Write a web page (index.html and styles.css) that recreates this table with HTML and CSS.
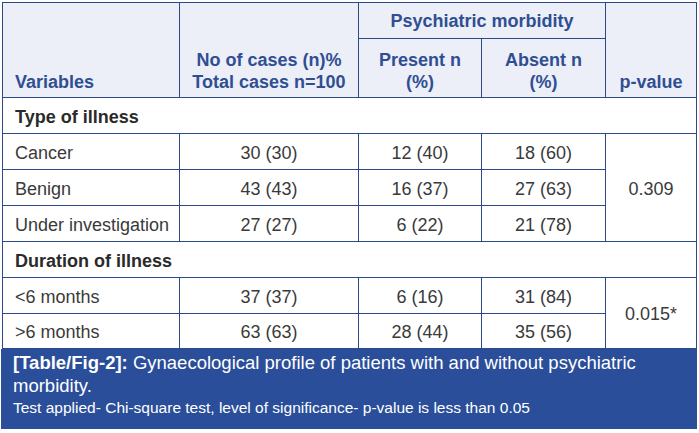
FILE: index.html
```html
<!DOCTYPE html>
<html>
<head>
<meta charset="utf-8">
<link rel="stylesheet" href="styles.css">
</head>
<body>
<div class="wrap">
<table class="tbl">
  <colgroup>
    <col class="c1"><col class="c2"><col class="c3"><col class="c4"><col class="c5">
  </colgroup>
  <thead>
    <tr class="h1">
      <th rowspan="2" class="left bottom">Variables</th>
      <th rowspan="2" class="bottom">No of cases (n)%<br>Total cases n=100</th>
      <th colspan="2" class="mid">Psychiatric morbidity</th>
      <th rowspan="2" class="bottom">p-value</th>
    </tr>
    <tr class="h2">
      <th class="bottom">Present n<br>(%)</th>
      <th class="bottom">Absent n<br>(%)</th>
    </tr>
  </thead>
  <tbody>
    <tr class="sec"><td colspan="5" class="left">Type of illness</td></tr>
    <tr><td class="left">Cancer</td><td>30 (30)</td><td>12 (40)</td><td>18 (60)</td><td rowspan="3">0.309</td></tr>
    <tr><td class="left">Benign</td><td>43 (43)</td><td>16 (37)</td><td>27 (63)</td></tr>
    <tr><td class="left">Under investigation</td><td>27 (27)</td><td>6 (22)</td><td>21 (78)</td></tr>
    <tr class="sec"><td colspan="5" class="left">Duration of illness</td></tr>
    <tr><td class="left">&lt;6 months</td><td>37 (37)</td><td>6 (16)</td><td>31 (84)</td><td rowspan="2">0.015*</td></tr>
    <tr class="last"><td class="left">&gt;6 months</td><td>63 (63)</td><td>28 (44)</td><td>35 (56)</td></tr>
  </tbody>
</table>
<div class="caption">
  <p class="cap-main"><span class="cap-label">[Table/Fig-2]:</span> <span>Gynaecological profile of patients with and without psychiatric</span><br><span>morbidity.</span></p>
  <p class="cap-note">Test applied- Chi-square test, level of significance- p-value is less than 0.05</p>
</div>
</div>
</body>
</html>
```
FILE: styles.css
```css
html, body {
  margin: 0;
  padding: 0;
  background: #ffffff;
}
body {
  font-family: "Liberation Sans", Arial, sans-serif;
  color: #3a3a3a;
}
.wrap {
  width: 696px;
  padding: 2px 0 0 1px;
}
.tbl {
  border-collapse: collapse;
  width: 694px;
  margin-left: 1px;
  table-layout: fixed;
  font-size: 18px;
}
.c1 { width: 177px; }
.c2 { width: 179px; }
.c3 { width: 123px; }
.c4 { width: 124px; }
.c5 { width: 91px; }
.tbl th, .tbl td {
  border: 1px solid #2c4a89;
  padding: 0 4px;
  text-align: center;
}
.tbl thead th {
  background: #eceef8;
  color: #2f4f92;
  font-weight: bold;
  line-height: 22px;
}
.h1 { height: 36px; }
.h2 { height: 59px; }
.tbl th.bottom { vertical-align: bottom; padding-bottom: 4px; }
.tbl th.mid { vertical-align: middle; }
.tbl .left { text-align: left; padding-left: 12px; }
.tbl tbody tr { height: 36px; }
.tbl tbody tr.last { height: 35px; }
.tbl tbody td { line-height: 20px; padding-top: 2px; padding-bottom: 0; }
.sec td { font-weight: bold; color: #2a2a2a; }
.caption {
  background: #2a4e99;
  color: #ffffff;
  width: 696px;
  height: 80px;
  padding: 2px 0 0 12px;
  box-sizing: border-box;
}
.caption p { margin: 0; }
.cap-label { font-weight: bold; }
.cap-main { font-size: 18.5px; line-height: 23px; white-space: nowrap; }
.cap-note { font-size: 15.5px; line-height: 22px; }
```
